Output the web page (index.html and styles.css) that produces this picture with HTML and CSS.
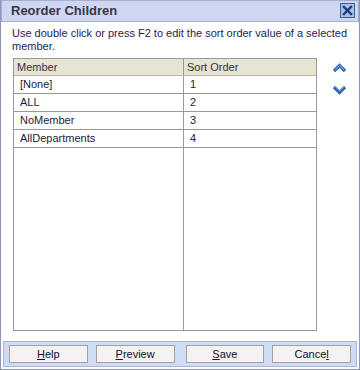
FILE: index.html
```html
<!DOCTYPE html>
<html>
<head>
<meta charset="utf-8">
<link rel="stylesheet" href="styles.css">
</head>
<body>
<div class="dialog">
  <div class="titlebar">
    <span class="title">Reorder Children</span>
    <span class="close">
      <svg width="13" height="13" viewBox="0 0 13 13"><path d="M3 3 L10 10 M10 3 L3 10" stroke="#1d3f78" stroke-width="2.4" stroke-linecap="square"/></svg>
    </span>
  </div>
  <div class="instructions">Use double click or press F2 to edit the sort order value of a selected member.</div>
  <div class="content">
    <div class="grid">
      <div class="row head"><div class="c1">Member</div><div class="c2">Sort Order</div></div>
      <div class="row"><div class="c1">[None]</div><div class="c2">1</div></div>
      <div class="row"><div class="c1">ALL</div><div class="c2">2</div></div>
      <div class="row"><div class="c1">NoMember</div><div class="c2">3</div></div>
      <div class="row"><div class="c1">AllDepartments</div><div class="c2">4</div></div>
      <div class="row filler"><div class="c1"></div><div class="c2"></div></div>
    </div>
    <div class="side">
      <svg class="arrow" width="15" height="10" viewBox="0 0 15 10"><path d="M2 8 L7.5 2.5 L13 8" fill="none" stroke="#2f64b4" stroke-width="3.2" stroke-linejoin="miter"/><path d="M3 6.8 L7.5 2.4 L12 6.8" fill="none" stroke="#8fb4e8" stroke-width="1"/></svg>
      <svg class="arrow" width="15" height="10" viewBox="0 0 15 10"><path d="M2 2 L7.5 7.5 L13 2" fill="none" stroke="#2f64b4" stroke-width="3.2" stroke-linejoin="miter"/><path d="M3 1.6 L7.5 6 L12 1.6" fill="none" stroke="#8fb4e8" stroke-width="1"/></svg>
    </div>
  </div>
  <div class="buttonbar">
    <button class="btn"><u>H</u>elp</button>
    <button class="btn"><u>P</u>review</button>
    <button class="btn"><u>S</u>ave</button>
    <button class="btn">Cance<u>l</u></button>
  </div>
</div>
</body>
</html>
```
FILE: styles.css
```css
html, body {
  margin: 0;
  padding: 0;
  background: #ffffff;
}
.dialog {
  width: 360px;
  height: 370px;
  box-sizing: border-box;
  border: 1px solid #8d97b5;
  border-top: none;
  display: flex;
  flex-direction: column;
  font-family: "Liberation Sans", Arial, sans-serif;
  font-size: 11px;
  color: #1c1c3c;
  background: #ffffff;
}
.titlebar {
  height: 22px;
  box-sizing: border-box;
  border: 1px solid #a8b0d0;
  background: #cfd6f2;
  display: flex;
  align-items: center;
  justify-content: space-between;
  padding: 0 3px 0 9px;
}
.title {
  font-weight: bold;
  font-size: 13px;
  color: #383848;
}
.close {
  width: 15px;
  height: 15px;
  box-sizing: border-box;
  border: 1px solid #3b6298;
  background: #a8c0e4;
  display: flex;
  align-items: center;
  justify-content: center;
}
.instructions {
  padding: 5px 10px 0 11px;
  line-height: 13px;
  font-size: 11px;
  color: #1e1e50;
  height: 31px;
}
.content {
  display: flex;
  padding-left: 12px;
  height: 274px;
}
.grid {
  width: 304px;
  box-sizing: border-box;
  border: 1px solid #9a9a9a;
  display: flex;
  flex-direction: column;
}
.row {
  display: flex;
  height: 18px;
  box-sizing: border-box;
  border-bottom: 1px solid #9a9a90;
  align-items: center;
}
.row.head {
  height: 17px;
  background: #e6e4d2;
  border-bottom: 1px solid #b8b8a8;
  color: #333348;
}
.row.filler {
  flex: 1;
  border-bottom: none;
  align-items: stretch;
}
.c1 {
  width: 170px;
  box-sizing: border-box;
  border-right: 1px solid #9a9a9a;
  padding-left: 3px;
  height: 100%;
  display: flex;
  align-items: center;
}
.c2 {
  flex: 1;
  padding-left: 3px;
  height: 100%;
  display: flex;
  align-items: center;
}
.row:not(.head) .c1 { padding-left: 6px; }
.row:not(.head) .c2 { padding-left: 6px; }
.side {
  display: flex;
  flex-direction: column;
  padding: 5px 0 0 15px;
  gap: 12px;
}
.arrow { display: block; }
.buttonbar {
  margin: 10px 2px 2px 2px;
  height: 26px;
  box-sizing: border-box;
  border: 1px solid #a8b4d8;
  background: #cfdcf2;
  display: flex;
  align-items: center;
  padding: 0 5px;
  gap: 8px;
}
.btn {
  width: 80px;
  height: 18px;
  box-sizing: border-box;
  border: 1px solid #a0a0a8;
  background: #f6f2f2;
  font-family: "Liberation Sans", Arial, sans-serif;
  font-size: 11px;
  color: #101030;
  padding: 0;
  margin: 0;
}
.btn:nth-child(3) { margin-left: 3px; }
```
